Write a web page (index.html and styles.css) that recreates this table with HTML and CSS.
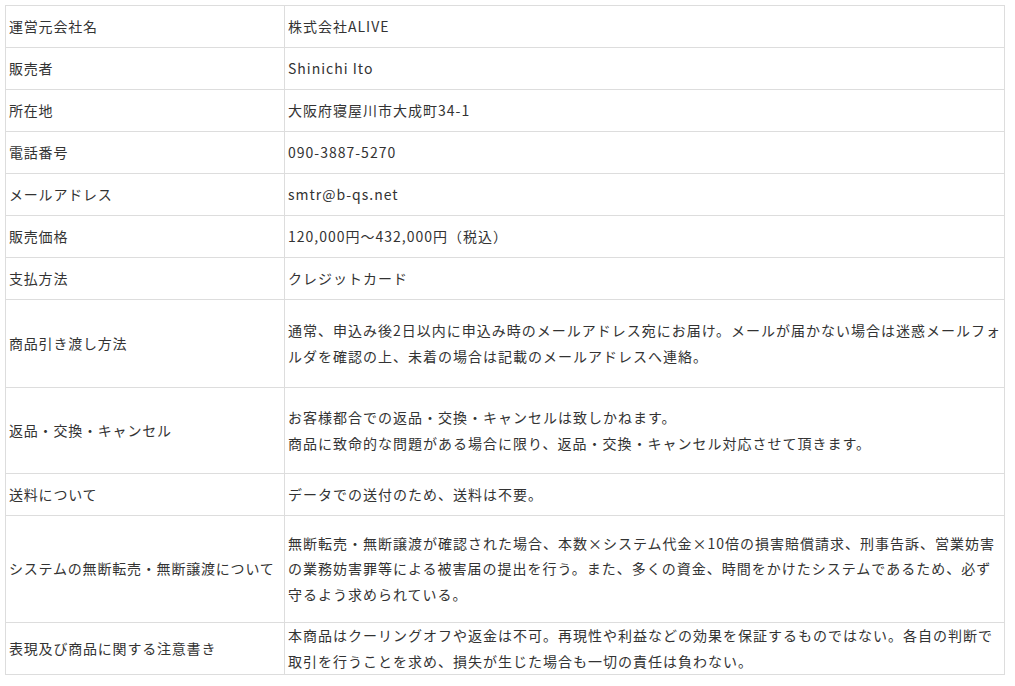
FILE: index.html
```html
<!DOCTYPE html>
<html lang="ja">
<head>
<meta charset="utf-8">
<title>特定商取引法に基づく表記</title>
<link rel="stylesheet" href="styles.css">
</head>
<body>
<div class="wrap">
<table class="law">
  <tbody>
    <tr class="r1"><th>運営元会社名</th><td>株式会社ALIVE</td></tr>
    <tr class="r1"><th>販売者</th><td>Shinichi Ito</td></tr>
    <tr class="r1"><th>所在地</th><td>大阪府寝屋川市大成町34-1</td></tr>
    <tr class="r1"><th>電話番号</th><td>090-3887-5270</td></tr>
    <tr class="r1"><th>メールアドレス</th><td>smtr@b-qs.net</td></tr>
    <tr class="r1"><th>販売価格</th><td>120,000円～432,000円（税込）</td></tr>
    <tr class="r1"><th>支払方法</th><td>クレジットカード</td></tr>
    <tr class="r2"><th>商品引き渡し方法</th><td>通常、申込み後2日以内に申込み時のメールアドレス宛にお届け。メールが届かない場合は迷惑メールフォルダを確認の上、未着の場合は記載のメールアドレスへ連絡。</td></tr>
    <tr class="r2b"><th>返品・交換・キャンセル</th><td>お客様都合での返品・交換・キャンセルは致しかねます。<br>商品に致命的な問題がある場合に限り、返品・交換・キャンセル対応させて頂きます。</td></tr>
    <tr class="r1"><th>送料について</th><td>データでの送付のため、送料は不要。</td></tr>
    <tr class="r3"><th>システムの無断転売・無断譲渡について</th><td>無断転売・無断譲渡が確認された場合、本数×システム代金×10倍の損害賠償請求、刑事告訴、営業妨害の業務妨害罪等による被害届の提出を行う。また、多くの資金、時間をかけたシステムであるため、必ず守るよう求められている。</td></tr>
    <tr class="r4"><th>表現及び商品に関する注意書き</th><td>本商品はクーリングオフや返金は不可。再現性や利益などの効果を保証するものではない。各自の判断で取引を行うことを求め、損失が生じた場合も一切の責任は負わない。</td></tr>
  </tbody>
</table>
</div>
</body>
</html>
```

FILE: styles.css
```css
html, body {
  margin: 0;
  padding: 0;
  background: #ffffff;
}

.wrap {
  padding: 5px 10px 0 5px;
}

.law {
  width: 1000px;
  border-collapse: collapse;
  table-layout: fixed;
  font-family: "Noto Sans CJK JP", "Noto Sans", sans-serif;
  font-size: 14px;
  line-height: 25.5px;
  color: #333333;
}

.law th,
.law td {
  border: 1px solid #dddddd;
  vertical-align: middle;
  text-align: left;
  font-weight: normal;
  padding: 0 2px 0 3px;
}

.law th {
  width: 273px;
  letter-spacing: 0.8px;
  white-space: nowrap;
}

.law td {
  letter-spacing: 1px;
  padding-left: 3px;
}

.r1 { height: 42px; }
.r2 { height: 88px; }
.r2b { height: 86px; }
.r3 { height: 107px; }
.r4 { height: 50px; }
```
